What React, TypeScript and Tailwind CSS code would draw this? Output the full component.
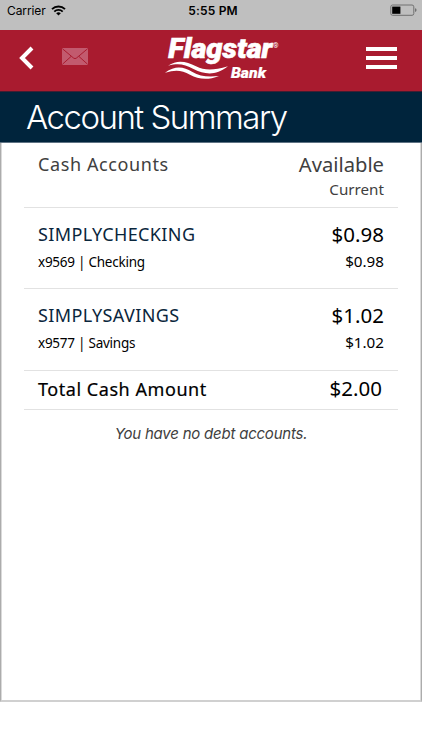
const accounts = [
  { name: "SIMPLYCHECKING", detail: "x9569 | Checking", available: "$0.98", current: "$0.98" },
  { name: "SIMPLYSAVINGS", detail: "x9577 | Savings", available: "$1.02", current: "$1.02" },
];

function StatusBar() {
  return (
    <div className="grid h-[30px] grid-cols-3 items-start bg-[#bfbfbf] pt-[3px] text-black">
      <div className="flex items-center gap-[6px] pl-[7px] text-[12px] leading-[15px] tracking-[-0.1px]">
        <span>Carrier</span>
        <svg width="15" height="11" viewBox="0 0 15 11" fill="none" stroke="#000" strokeWidth="1.9" className="-ml-px">
          <path d="M1 4.1a9.3 9.3 0 0 1 13 0" />
          <path d="M3.3 6.6a6 6 0 0 1 8.4 0" />
          <path d="M7.5 10.6 5.2 8.3a3.3 3.3 0 0 1 4.6 0z" fill="#000" stroke="none" />
        </svg>
      </div>
      <div className="pl-1 text-center text-[12px] font-semibold leading-[15px] tracking-[0.2px]">5:55 PM</div>
      <div className="flex justify-end pr-[5px] pt-px">
        <svg width="27" height="12" viewBox="0 0 27 12">
          <rect x="0.8" y="1" width="23" height="10.3" rx="1.8" fill="none" stroke="#707070" />
          <rect x="2.2" y="2.6" width="8.2" height="7.2" fill="#000" />
          <path d="M25 4.3q1.6.3 1.6 1.8T25 8z" fill="#707070" />
        </svg>
      </div>
    </div>
  );
}

function Logo() {
  return (
    <svg width="120" height="54" viewBox="0 -1 120 54" fill="#fff" className="overflow-visible font-['Roboto',sans-serif]">
      <text x="4.3" y="23.3" fontSize="27.5" fontWeight="900" fontStyle="italic" textLength="104" lengthAdjust="spacingAndGlyphs" stroke="#fff" strokeWidth="0.6">
        Flagstar
      </text>
      <text x="109" y="13" fontSize="7" fontWeight="400">®</text>
      <path d="M4 30.8C14 23.8 23 27 32 31.3S49 35.5 64 31.3C51 41.5 40 39 30 34.2S15 28 4 30.8z" />
      <path d="M1 37.8C12 29.8 20 32.3 28 36.7S43 42.3 55 41C43 45.8 34 44 26 39.7S12 34.3 1 37.8z" />
      <text x="67" y="42.5" fontSize="14.5" fontWeight="900" fontStyle="italic" textLength="35" lengthAdjust="spacingAndGlyphs" stroke="#fff" strokeWidth="0.2">
        Bank
      </text>
    </svg>
  );
}

function NavBar() {
  return (
    <header className="flex h-[61px] items-center justify-between bg-[#a91b2f] pl-[19px] pr-[25px]">
      <div className="flex w-[145px] items-center gap-[28px]">
        <svg width="15" height="24" viewBox="0 0 15 24" fill="none" stroke="#fff" strokeWidth="4" className="mt-[-5px]">
          <path d="M13 2 3 12l10 10" />
        </svg>
        <svg width="26" height="17" viewBox="0 0 26 17" className="mt-[-8px]">
          <rect width="26" height="17" rx="1" fill="#c25a6e" />
          <path d="M.5.8 11.5 10q1.5 1.3 3 0L25.5.8M.5 16.2 9 8.5M25.5 16.2 17 8.5" fill="none" stroke="#a91b2f" />
        </svg>
      </div>
      <Logo />
      <div className="ml-auto flex w-[31px] flex-col gap-[5px] pb-[5px]">
        <span className="h-1 bg-white" />
        <span className="h-1 bg-white" />
        <span className="h-1 bg-white" />
      </div>
    </header>
  );
}

export default function App() {
  return (
    <main className="h-[750px] w-[422px] overflow-hidden bg-white font-['Inter',sans-serif]">
      <StatusBar />
      <NavBar />
      <h1 className="h-[52px] border-b border-t border-b-[#5f7384] border-t-[#431d32] bg-[#00243c] pl-[26px] text-[33px] font-light leading-[51px] tracking-[-1.5px] text-white">
        Account Summary
      </h1>

      <section className="h-[559px] border-x border-b-2 border-x-[#acacac] border-b-[#d0d0d0] px-[23px] font-['Noto_Sans',sans-serif] text-black shadow-[inset_1px_0_#dadada,inset_-1px_0_#dadada]">
        <div className="flex h-[65px] justify-between border-b border-[#e2e2e2] px-[14px] text-[#404040]">
          <h2 className="pt-[9px] text-[18px] leading-6 tracking-[0.6px]">Cash Accounts</h2>
          <div className="pt-[9px] text-right">
            <div className="text-[20.2px] leading-6">Available</div>
            <div className="mt-px text-[15.2px] leading-6">Current</div>
          </div>
        </div>

        <div>
          {accounts.map((account) => (
            <div
              key={account.name}
              className="flex h-[81px] justify-between border-b border-[#e2e2e2] px-[14px] pt-[14px] last:h-[82px]"
            >
              <div>
                <div className="text-[18px] leading-6 tracking-[0.38px] text-[#0a263c]">{account.name}</div>
                <div className="mt-1 text-[13.5px] leading-6 tracking-[-0.25px]">{account.detail}</div>
              </div>
              <div className="text-right">
                <div className="text-[20.5px] leading-6">{account.available}</div>
                <div className="mt-[3px] text-[15.2px] leading-6">{account.current}</div>
              </div>
            </div>
          ))}
        </div>

        <div className="flex h-[39px] justify-between border-b border-[#e2e2e2] pl-[14px] pr-[16px] pt-[5px]">
          <div className="pt-px text-[18px] leading-6 tracking-[0.55px] [-webkit-text-stroke:0.2px_#000]">
            Total Cash Amount
          </div>
          <div className="text-[20.5px] leading-6">$2.00</div>
        </div>

        <p className="mt-[12px] text-center font-['Inter',sans-serif] text-[15px] italic leading-6 tracking-[-0.22px] text-[#404040]">
          You have no debt accounts.
        </p>
      </section>
    </main>
  );
}
